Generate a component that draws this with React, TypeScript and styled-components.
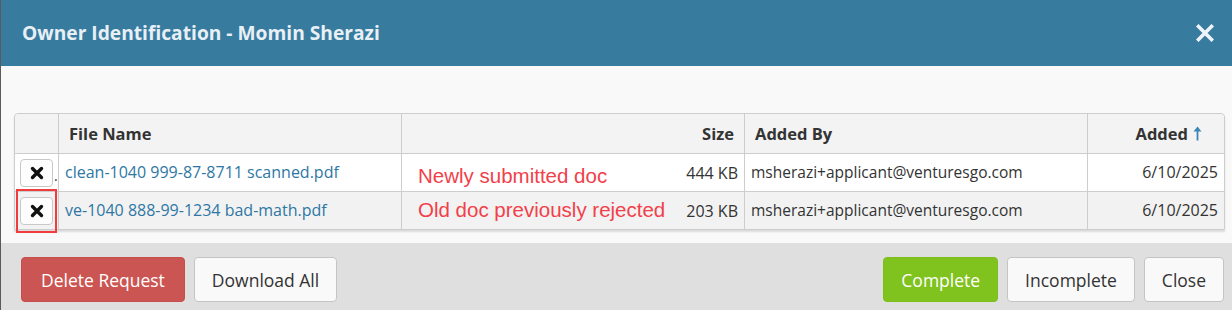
import React from "react";
import styled, { createGlobalStyle } from "styled-components";

const GlobalStyle = createGlobalStyle`
  html, body { margin: 0; padding: 0; background: #f9f9f9; }
  body { font-family: "Open Sans", "DejaVu Sans", sans-serif; }
`;

type Doc = {
  name: string;
  note: string;
  noteShift: number;
  size: string;
  by: string;
  added: string;
  flagged?: boolean;
};

const docs: Doc[] = [
  {
    name: "clean-1040 999-87-8711 scanned.pdf",
    note: "Newly submitted doc",
    noteShift: 4,
    size: "444 KB",
    by: "msherazi+applicant@venturesgo.com",
    added: "6/10/2025",
  },
  {
    name: "ve-1040 888-99-1234 bad-math.pdf",
    note: "Old doc previously rejected",
    noteShift: 0,
    size: "203 KB",
    by: "msherazi+applicant@venturesgo.com",
    added: "6/10/2025",
    flagged: true,
  },
];

const Modal = styled.div`
  width: 1232px;
  height: 310px;
  display: flex;
  flex-direction: column;
  border-left: 1px solid #5a5a5a;
  box-sizing: border-box;
  overflow: hidden;
`;

const Header = styled.div`
  height: 66px;
  flex: none;
  background: #377b9f;
  display: flex;
  align-items: center;
  justify-content: space-between;
  padding: 0 18px 0 21px;
`;

const Title = styled.h1`
  margin: 0;
  font-family: "Open Sans", sans-serif;
  font-size: 19.2px;
  font-weight: 700;
  color: #e8f0f6;
  padding-bottom: 2px;
`;

const Body = styled.div`
  flex: 1;
  background: #f9f9f9;
  padding: 47px 7px 0 13px;
`;

const Grid = styled.div`
  border: 1px solid #cdcdcd;
  border-radius: 4px 4px 0 0;
  box-shadow: 0 2px 2px rgba(0, 0, 0, 0.12);
  font-family: "Open Sans", sans-serif;
  color: #333;
  overflow: visible;
`;

const Row = styled.div<{ $bg: string; $head?: boolean }>`
  display: grid;
  grid-template-columns: 43px 343px 343px 343px 1fr;
  height: ${(p) => (p.$head ? 39 : 37)}px;
  background: ${(p) => p.$bg};
  &:not(:last-child) { border-bottom: 1px solid #cdcdcd; }
  &:first-child { border-radius: 4px 4px 0 0; }
`;

const HeadCell = styled.div<{ $align?: string }>`
  display: flex;
  align-items: center;
  justify-content: ${(p) => (p.$align === "right" ? "flex-end" : "flex-start")};
  padding: 0 10px;
  font-weight: 700;
  font-size: 16.5px;
  border-left: 1px solid #cdcdcd;
  &:first-child { border-left: none; }
  &:last-child { padding-right: 22px; }
`;

const Cell = styled.div<{ $align?: string }>`
  padding: 0 6px;
  text-align: ${(p) => p.$align || "left"};
  border-left: 1px solid #cdcdcd;
  white-space: nowrap;
  line-height: 36px;
  font-size: 16px;
`;

const ByCell = styled(Cell)`
  font-size: 15.5px;
`;

const ActionCell = styled.div`
  position: relative;
  display: flex;
  align-items: center;
  padding-left: 5px;
  white-space: nowrap;
`;

const RemoveButton = styled.button`
  width: 33px;
  height: 28px;
  padding: 0;
  background: #fdfdfd;
  border: 1px solid #c8c8c8;
  border-radius: 4px;
  display: inline-flex;
  align-items: center;
  justify-content: center;
`;

const Dot = styled.span`
  font-size: 14px;
  color: #333;
  margin-left: 1px;
  padding-top: 6px;
`;

const Highlight = styled.span`
  position: absolute;
  left: 1px;
  top: -3px;
  width: 41px;
  height: 44px;
  border: 2px solid #f03c3c;
  box-sizing: border-box;
  pointer-events: none;
`;

const FileLink = styled.a`
  color: #2e77a4;
  text-decoration: none;
`;

const SizeCell = styled(Cell)`
  display: flex;
  justify-content: space-between;
  align-items: baseline;
`;

const Note = styled.span<{ $shift: number }>`
  font-family: "Liberation Sans", Arial, sans-serif;
  font-size: 20.5px;
  color: #f2404a;
  margin-left: 10px;
  position: relative;
  top: ${(p) => p.$shift}px;
`;

const Footer = styled.div`
  height: 67px;
  flex: none;
  background: #dfdfdf;
  display: flex;
  align-items: flex-start;
  padding: 14px 8px 0 20px;
  box-sizing: border-box;
  gap: 9px;
`;

const Spacer = styled.div`
  flex: 1;
`;

const Button = styled.button<{ $variant?: "danger" | "success" }>`
  height: 45px;
  padding: 0 ${(p) => (p.$variant === "danger" ? 19 : 17)}px;
  border-radius: 4px;
  font-family: "Open Sans", sans-serif;
  font-size: 17.5px;
  cursor: pointer;
  border: 1px solid
    ${(p) =>
      p.$variant === "danger" ? "#c74e4b" : p.$variant === "success" ? "#7cbf1c" : "#c4c4c4"};
  background: ${(p) =>
    p.$variant === "danger" ? "#cb5552" : p.$variant === "success" ? "#80c21e" : "#f9f9f9"};
  color: ${(p) => (p.$variant ? "#ffffff" : "#333333")};
`;

const CloseIcon = () => (
  <svg width="18" height="18" viewBox="0 0 18 18">
    <path d="M2.5 2.5 L15.5 15.5 M15.5 2.5 L2.5 15.5" stroke="#eef4f9" strokeWidth="3.6" strokeLinecap="square" />
  </svg>
);

const RemoveIcon = () => (
  <svg width="14" height="14" viewBox="0 0 14 14">
    <path d="M2.5 2.5 L11.5 11.5 M11.5 2.5 L2.5 11.5" stroke="#111" strokeWidth="3.4" strokeLinecap="round" />
  </svg>
);

const SortArrow = () => (
  <svg width="9" height="15" viewBox="0 0 9 15" style={{ marginLeft: 5 }}>
    <path d="M4.5 0.5 L8.5 5.5 L5.4 5.5 L5.4 14.5 L3.6 14.5 L3.6 5.5 L0.5 5.5 Z" fill="#3d87b5" />
  </svg>
);

export default function App() {
  return (
    <>
      <GlobalStyle />
      <Modal>
        <Header>
          <Title>Owner Identification - Momin Sherazi</Title>
          <CloseIcon />
        </Header>
        <Body>
          <Grid>
            <Row $bg="#f3f3f3" $head>
              <HeadCell />
              <HeadCell>File Name</HeadCell>
              <HeadCell $align="right">Size</HeadCell>
              <HeadCell>Added By</HeadCell>
              <HeadCell $align="right">
                Added
                <SortArrow />
              </HeadCell>
            </Row>
            {docs.map((d, i) => (
              <Row key={d.name} $bg={i % 2 === 1 ? "#f2f2f2" : "#ffffff"}>
                <ActionCell>
                  <RemoveButton>
                    <RemoveIcon />
                  </RemoveButton>
                  <Dot>.</Dot>
                  {d.flagged && <Highlight />}
                </ActionCell>
                <Cell>
                  <FileLink href="#">{d.name}</FileLink>
                </Cell>
                <SizeCell>
                  <Note $shift={d.noteShift}>{d.note}</Note>
                  <span>{d.size}</span>
                </SizeCell>
                <ByCell>{d.by}</ByCell>
                <Cell $align="right">{d.added}</Cell>
              </Row>
            ))}
          </Grid>
        </Body>
        <Footer>
          <Button $variant="danger">Delete Request</Button>
          <Button>Download All</Button>
          <Spacer />
          <Button $variant="success">Complete</Button>
          <Button>Incomplete</Button>
          <Button>Close</Button>
        </Footer>
      </Modal>
    </>
  );
}
